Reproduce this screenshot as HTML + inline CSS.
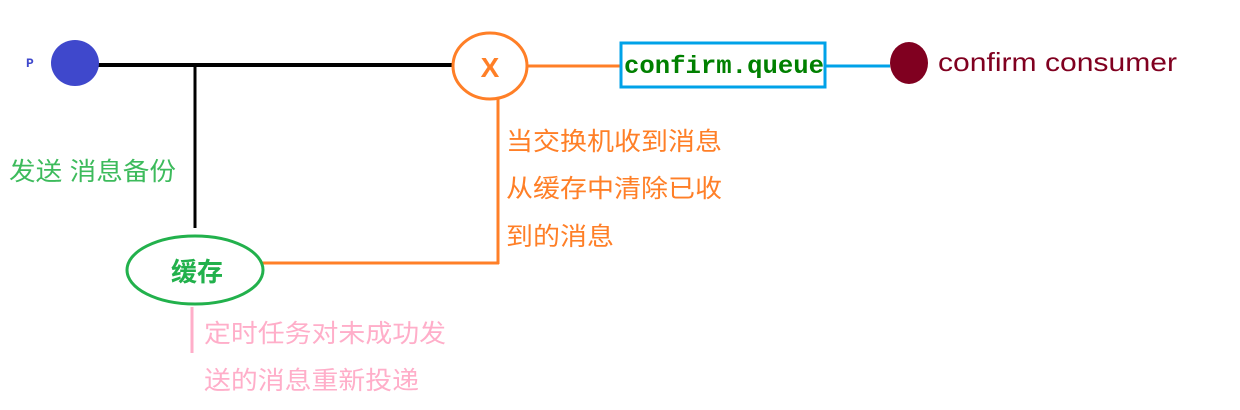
<!DOCTYPE html>
<html><head><meta charset="utf-8"><style>
html,body{margin:0;padding:0;background:#fff;width:1240px;height:410px;overflow:hidden}
svg text{font-family:"Liberation Sans","Noto Sans CJK SC",sans-serif}
</style></head><body>
<svg width="1240" height="410" viewBox="0 0 1240 410" xmlns="http://www.w3.org/2000/svg">
<line x1="98" y1="65" x2="452" y2="65" stroke="#000" stroke-width="4"/>
<line x1="195" y1="65" x2="195" y2="228" stroke="#000" stroke-width="3"/>
<ellipse cx="75" cy="63" rx="24" ry="23" fill="#3f48cc"/>
<text x="26" y="67" font-size="13" font-weight="bold" fill="#3f48cc" style="font-family:'Liberation Mono',monospace">P</text>
<ellipse cx="490" cy="66" rx="37" ry="33" fill="#fff" stroke="#ff7f27" stroke-width="3"/>
<text x="490" y="77" font-size="28" font-weight="bold" fill="#ff7f27" text-anchor="middle">X</text>
<line x1="528" y1="66" x2="620" y2="66" stroke="#ff7f27" stroke-width="3"/>
<line x1="498" y1="99" x2="498" y2="264" stroke="#ff7f27" stroke-width="3"/>
<line x1="262" y1="263" x2="499" y2="263" stroke="#ff7f27" stroke-width="3"/>
<rect x="621" y="43" width="204" height="44" fill="#fff" stroke="#00a2e8" stroke-width="3"/>
<text x="624" y="73" font-size="25" font-weight="bold" fill="#008000" textLength="200" lengthAdjust="spacingAndGlyphs" style="font-family:'Liberation Mono',monospace">confirm.queue</text>
<line x1="826" y1="66" x2="890" y2="66" stroke="#00a2e8" stroke-width="3"/>
<ellipse cx="909" cy="63" rx="19" ry="21" fill="#800020"/>
<text x="938" y="71" font-size="26" fill="#800020" textLength="239" lengthAdjust="spacingAndGlyphs">confirm consumer</text>
<ellipse cx="195" cy="270" rx="68" ry="34" fill="#fff" stroke="#22b14c" stroke-width="3"/>
<text x="197" y="281" font-size="26" font-weight="bold" fill="#22b14c" text-anchor="middle">缓存</text>
<text x="9" y="180" font-size="25" fill="#3dbb5c" textLength="167" lengthAdjust="spacingAndGlyphs">发送 消息备份</text>
<g font-size="25" fill="#ff7f27">
<text x="506" y="150" textLength="216" lengthAdjust="spacingAndGlyphs">当交换机收到消息</text>
<text x="506" y="197" textLength="216" lengthAdjust="spacingAndGlyphs">从缓存中清除已收</text>
<text x="506" y="245" textLength="108" lengthAdjust="spacingAndGlyphs">到的消息</text>
</g>
<line x1="192" y1="307" x2="192" y2="353" stroke="#ffaec9" stroke-width="3"/>
<g font-size="25" fill="#ffaec9">
<text x="204" y="342" textLength="242" lengthAdjust="spacingAndGlyphs">定时任务对未成功发</text>
<text x="204" y="389" textLength="215" lengthAdjust="spacingAndGlyphs">送的消息重新投递</text>
</g>
</svg>
</body></html>
